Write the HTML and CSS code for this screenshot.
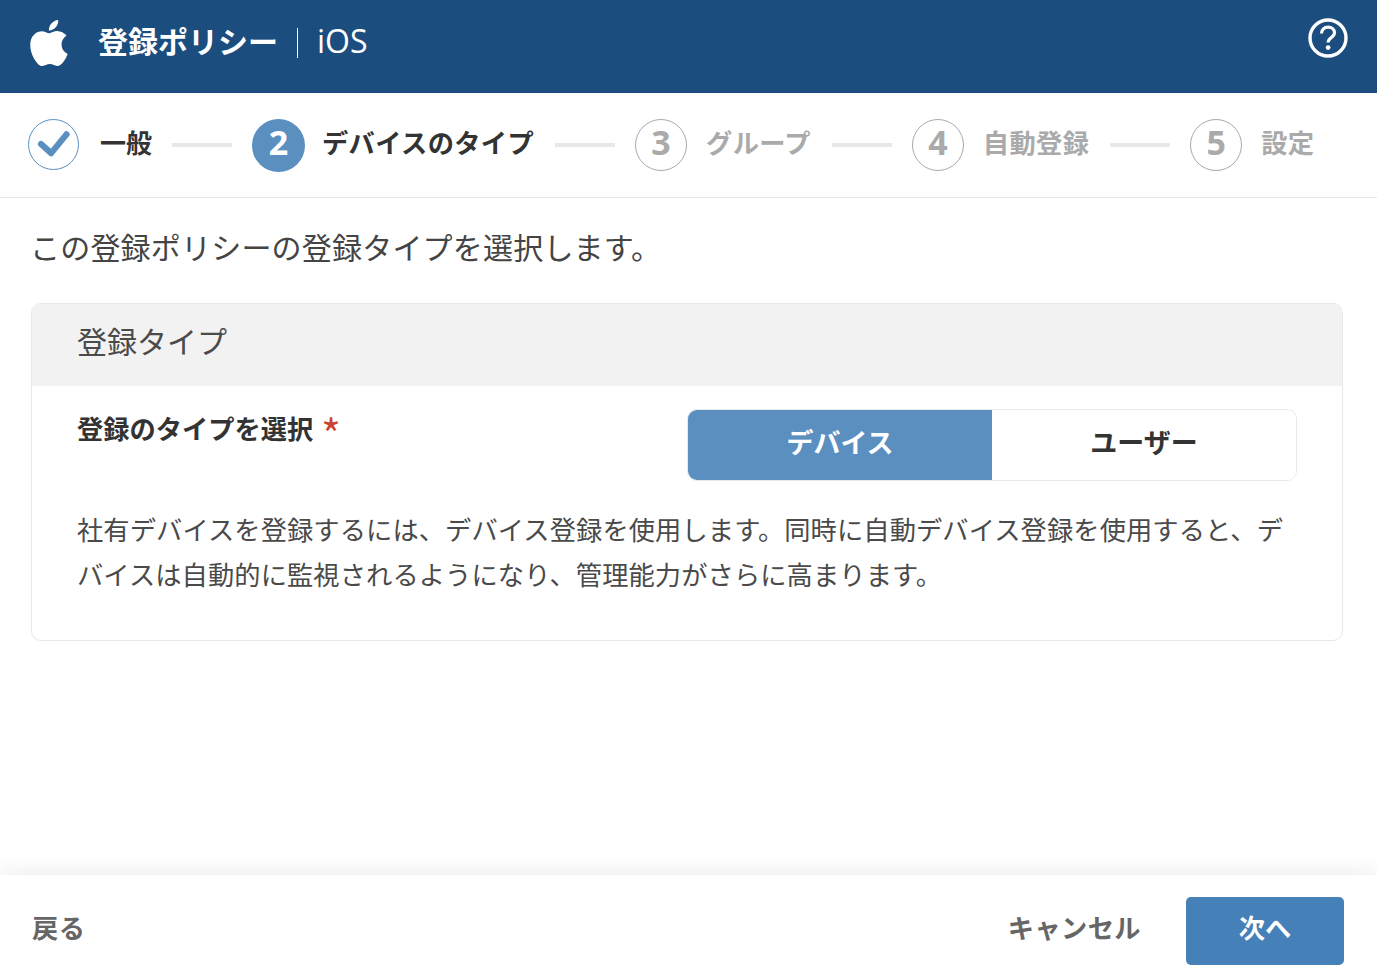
FILE: index.html
```html
<!DOCTYPE html>
<html lang="ja">
<head>
  <meta charset="UTF-8">
  <meta name="viewport" content="width=device-width, initial-scale=1.0">
  <title>登録ポリシー | iOS</title>
  <link rel="stylesheet" href="styles.css">
</head>
<body>
  <div class="page">
    <header class="topbar">
      <svg class="apple" viewBox="0 0 24 24" aria-hidden="true"><path d="M12.152 6.896c-.948 0-2.415-1.078-3.96-1.04-2.04.027-3.91 1.183-4.961 3.014-2.117 3.675-.546 9.103 1.519 12.09 1.013 1.454 2.208 3.09 3.792 3.039 1.52-.065 2.09-.987 3.935-.987 1.831 0 2.35.987 3.96.948 1.637-.026 2.676-1.48 3.676-2.948 1.156-1.688 1.636-3.325 1.662-3.415-.039-.013-3.182-1.221-3.22-4.857-.026-3.04 2.48-4.494 2.597-4.559-1.429-2.09-3.623-2.324-4.39-2.376-2-.156-3.675 1.09-4.61 1.09zM15.53 3.83c.843-1.012 1.4-2.427 1.245-3.83-1.207.052-2.662.805-3.532 1.818-.78.896-1.454 2.338-1.273 3.714 1.338.104 2.715-.688 3.559-1.701"/></svg>
      <span class="topbar-title">登録ポリシー</span>
      <span class="topbar-sep"></span>
      <span class="topbar-os">iOS</span>
      <svg class="help" viewBox="0 0 40 40" aria-hidden="true">
        <circle cx="20" cy="20" r="18" fill="none" stroke="#fff" stroke-width="3.4"/>
        <path d="M13.5 15.5c0-3.8 2.9-6.3 6.6-6.3 3.6 0 6.4 2.3 6.4 5.6 0 4.6-6.4 4.9-6.4 9.8" fill="none" stroke="#fff" stroke-width="3.2"/>
        <circle cx="20.1" cy="29.6" r="2.4" fill="#fff"/>
      </svg>
    </header>

    <nav class="steps">
      <div class="step done">
        <span class="step-mark"><svg viewBox="0 0 52 52" aria-hidden="true"><path d="M12.5 26l10.5 9.5 16-19.5" fill="none" stroke="#5a8fc0" stroke-width="6.5" stroke-linecap="round" stroke-linejoin="round"/></svg></span>
        <span class="step-name">一般</span>
      </div>
      <div class="step-line"></div>
      <div class="step current">
        <span class="step-mark">2</span>
        <span class="step-name">デバイスのタイプ</span>
      </div>
      <div class="step-line"></div>
      <div class="step">
        <span class="step-mark">3</span>
        <span class="step-name">グループ</span>
      </div>
      <div class="step-line"></div>
      <div class="step">
        <span class="step-mark">4</span>
        <span class="step-name">自動登録</span>
      </div>
      <div class="step-line"></div>
      <div class="step">
        <span class="step-mark">5</span>
        <span class="step-name">設定</span>
      </div>
    </nav>

    <main class="content">
      <p class="intro">この登録ポリシーの登録タイプを選択します。</p>
      <section class="card">
        <h2 class="card-head">登録タイプ</h2>
        <div class="card-body">
          <div class="field">
            <div class="field-label">登録のタイプを選択<span class="required">*</span></div>
            <div class="toggle">
              <button class="toggle-btn active">デバイス</button>
              <button class="toggle-btn">ユーザー</button>
            </div>
          </div>
          <p class="note">社有デバイスを登録するには、デバイス登録を使用します。同時に自動デバイス登録を使用すると、デバイスは自動的に監視されるようになり、管理能力がさらに高まります。</p>
        </div>
      </section>
    </main>

    <footer class="footer">
      <button class="link-btn">戻る</button>
      <div class="footer-right">
        <button class="link-btn">キャンセル</button>
        <button class="next-btn">次へ</button>
      </div>
    </footer>
  </div>
</body>
</html>
```

FILE: styles.css
```css
* { box-sizing: border-box; }
html, body { margin: 0; height: 100%; }
body { font-family: "Noto Sans CJK JP", "Noto Sans", sans-serif; color: #333; background: #fff; overflow: hidden; }
button { font-family: inherit; cursor: pointer; }

.page { display: flex; flex-direction: column; height: 100vh; }

.topbar { display: flex; align-items: center; height: 93px; flex: none; padding: 0 29px 12px 30px; background: #1b4d7e; color: #fff; }
.apple { width: 46px; height: 46px; margin: 4px 26px 0 -4px; fill: #fff; flex: none; }
.topbar-title { padding-bottom: 2px; font-size: 30px; font-weight: 700; line-height: 40px; }
.topbar-sep { width: 1px; height: 30px; margin: 4px 19px 0 19px; background: #fff; }
.topbar-os { font-family: "Open Sans", sans-serif; font-size: 32px; line-height: 40px; }
.help { width: 40px; height: 40px; margin-left: auto; margin-top: -6px; }

.steps { display: flex; align-items: center; height: 105px; flex: none; padding: 0 28px; border-bottom: 1px solid #e8e8e8; }
.step { display: flex; align-items: center; flex: none; }
.step-mark { display: flex; align-items: center; justify-content: center; width: 52px; height: 52px; padding-bottom: 6px; border: 1px solid #aaa; border-radius: 50%; font-family: "Open Sans", sans-serif; font-size: 34px; font-weight: 700; color: #aaa; }
.step-mark svg { width: 50px; height: 50px; display: block; flex: none; }
.step-name { margin-left: 19px; padding-right: 1px; padding-bottom: 6px; font-size: 26.25px; letter-spacing: 0.35px; font-weight: 700; line-height: 36px; color: #aaa; }
.step-line { width: 60px; height: 4px; margin: 0 20px; background: #e8e8e8; flex: none; }
.step.done .step-mark { width: 51px; height: 51px; margin-bottom: 2px; padding-bottom: 0; border-color: #5a8fc0; }
.step.done .step-name { margin-left: 21px; padding-right: 0; font-size: 26px; letter-spacing: 0; color: #333; }
.step.current .step-name { margin-left: 17px; padding-right: 1px; color: #333; }
.step.current .step-mark { width: 53px; height: 53px; border: none; background: #5a8fc0; color: #fff; }

.content { flex: 1; padding: 0 34px 0 31px; }
.intro { margin: 26px 0 35px -1px; font-size: 30px; letter-spacing: 0.2px; line-height: 44px; color: #444; }

.card { border: 1px solid #e8e8e8; border-radius: 10px; overflow: hidden; }
.card-head { margin: 0; padding: 0 45px; height: 82px; line-height: 72px; background: #f2f2f2; font-size: 30px; font-weight: 400; color: #4a4a4a; }
.card-body { padding: 23px 45px 43px; }
.field { display: flex; justify-content: space-between; align-items: flex-start; }
.field-label { font-size: 26.25px; font-weight: 700; line-height: 38px; color: #333; }
.required { margin-left: 8px; font-size: 42px; font-weight: 400; line-height: 0; vertical-align: -12px; color: #c9422c; }
.toggle { display: flex; width: 610px; height: 72px; border: 1px solid #e8e8e8; border-radius: 10px; overflow: hidden; }
.toggle-btn { flex: 1; padding: 0 0 8px; border: none; background: #fff; font-size: 27px; font-weight: 700; color: #333; }
.toggle-btn.active { background: #5a8fc0; color: #fff; }
.note { margin: 26px 0 0; font-size: 26.25px; letter-spacing: 0.1px; line-height: 45px; color: #4a4a4a; }

.footer { display: flex; align-items: center; justify-content: space-between; height: 104px; flex: none; padding: 8px 33px 0 32px; background: #fff; box-shadow: 0 -4px 20px rgba(0, 0, 0, 0.07); }
.footer-right { display: flex; align-items: center; gap: 45px; }
.link-btn { padding: 0 0 9px; border: none; background: none; font-size: 26.25px; letter-spacing: 0.4px; font-weight: 700; color: #666; }
.next-btn { width: 158px; height: 68px; padding: 0 0 9px; border: none; border-radius: 5px; background: #4580b8; color: #fff; font-size: 26.25px; font-weight: 700; }
```
